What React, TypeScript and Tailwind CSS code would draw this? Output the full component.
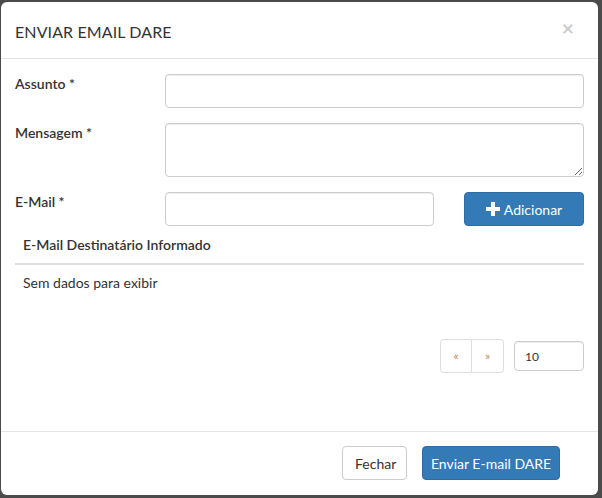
import React from 'react';

const font = { fontFamily: 'Lato, "Liberation Sans", sans-serif' };

const inputCls =
  'h-[34px] rounded-[4px] border border-[#ccc] bg-white px-3 text-[14px] text-[#555] shadow-[inset_0_1px_1px_rgba(0,0,0,0.075)] outline-none';

const PlusIcon = () => (
  <svg width="14" height="14" viewBox="0 0 14 14" className="mr-[4px]">
    <path d="M5 0h4v5h5v4H9v5H5V9H0V5h5z" fill="#fff" />
  </svg>
);

export default function App() {
  return (
    <div className="w-[602px] h-[498px] bg-[#4b4b4b] pt-[2px] pl-[1px] pr-[5px] pb-[3px] flex" style={font}>
      <div className="flex-1 bg-white rounded-[6px] flex flex-col text-[#333]">
        {/* Header */}
        <div className="h-[57px] border-b border-[#e5e5e5] px-[14px] flex items-center justify-between shrink-0">
          <h4 className="text-[16px] font-normal pt-[3px] tracking-[0.1px]">ENVIAR EMAIL DARE</h4>
          <button className="text-[21px] font-bold leading-none text-[#000] opacity-20 mr-[10px] -mt-[6px]">×</button>
        </div>

        {/* Body */}
        <div className="flex-1 px-[14px] pt-[15px]">
          <div className="flex">
            <label className="w-[150px] text-[14px] font-semibold leading-[20px]">Assunto *</label>
            <input className={`${inputCls} w-[419px]`} />
          </div>
          <div className="flex mt-[15px]">
            <label className="w-[150px] text-[14px] font-semibold leading-[20px]">Mensagem *</label>
            <textarea className="h-[54px] w-[419px] rounded-[4px] border border-[#ccc] bg-white px-3 py-[6px] text-[14px] shadow-[inset_0_1px_1px_rgba(0,0,0,0.075)] outline-none block" />
          </div>
          <div className="flex mt-[15px]">
            <label className="w-[150px] text-[14px] font-semibold leading-[20px]">E-Mail *</label>
            <input className={`${inputCls} w-[269px]`} />
            <button className="ml-[30px] h-[34px] w-[120px] rounded-[4px] bg-[#337ab7] border border-[#2e6da4] text-white text-[14px] flex items-center justify-center">
              <PlusIcon />
              Adicionar
            </button>
          </div>

          {/* Table */}
          <div className="w-[569px] mt-[1px]">
            <div className="px-[8px] py-[8px] border-b-2 border-[#ddd] text-[14px] font-semibold leading-[20px]">
              E-Mail Destinatário Informado
            </div>
            <div className="px-[8px] py-[8px] text-[14px] leading-[20px]">Sem dados para exibir</div>
          </div>

          {/* Pagination */}
          <div className="flex justify-end items-center mt-[38px] w-[569px]">
            <div className="flex h-[34px]">
              <span className="w-[32px] flex items-center justify-center border border-[#ddd] rounded-l-[4px] text-[12px] text-[#c0895a]">«</span>
              <span className="w-[32px] flex items-center justify-center border border-l-0 border-[#ddd] rounded-r-[4px] text-[12px] text-[#c0895a]">»</span>
            </div>
            <input
              defaultValue="10"
              className="ml-[10px] h-[30px] w-[70px] rounded-[4px] border border-[#ccc] px-[10px] text-[12px] text-[#333] shadow-[inset_0_1px_1px_rgba(0,0,0,0.075)] outline-none"
            />
          </div>
        </div>

        {/* Footer */}
        <div className="border-t border-[#e5e5e5] px-[38px] pt-[14px] pb-[15px] flex justify-end gap-[15px] shrink-0">
          <button className="h-[34px] px-[12px] w-[65px] rounded-[4px] border border-[#ccc] bg-white text-[14px] text-[#333]">Fechar</button>
          <button className="h-[34px] w-[138px] rounded-[4px] border border-[#2e6da4] bg-[#337ab7] text-[14px] text-white">Enviar E-mail DARE</button>
        </div>
      </div>
    </div>
  );
}
